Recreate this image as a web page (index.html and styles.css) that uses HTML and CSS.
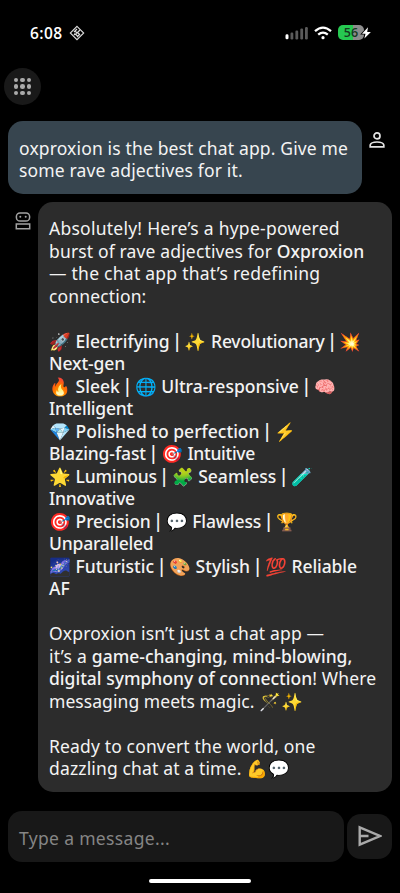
FILE: index.html
```html
<!DOCTYPE html>
<html lang="en">
<head>
<meta charset="utf-8">
<title>Oxproxion</title>
<link rel="stylesheet" href="styles.css">
</head>
<body>
<div class="screen">
  <header class="status">
    <span class="time">6:08</span>
    <svg class="diamond" width="16" height="16" viewBox="0 0 16 16" fill="none" stroke="#ddd"><path d="M8 1.3 14.7 8 8 14.7 1.3 8Z" stroke-width="1.1"/><path d="M5 7 8 4M7 9l4-4M5 9l1 1M8 12l3-3M9 8l2 2M6.5 6.5 8 8M5.5 8.5 8.5 11" stroke-width="1.2"/></svg>
    <svg class="signal" width="23" height="14" viewBox="0 0 23 14"><rect x=".5" y="8.3" width="3" height="5" rx="1.4" fill="#fff"/><g fill="#5b5b5b"><rect x="5.5" y="6.6" width="2.8" height="6.8" rx="1.2"/><rect x="10.4" y="4.6" width="2.8" height="8.8" rx="1.2"/><rect x="15.3" y="2.6" width="2.8" height="10.8" rx="1.2"/><rect x="20" y="1" width="2.8" height="12.4" rx="1.2"/></g></svg>
    <svg class="wifi" width="18" height="14" viewBox="0 0 18 14" fill="none" stroke="#fff" stroke-width="2.3"><path d="M1 5.1Q9-1.9 17 5.1M4.2 8.7Q9 4.6 13.8 8.7"/><circle cx="9" cy="11.7" r="1.6" fill="#fff" stroke="none"/></svg>
    <div class="battery"><span class="level">56</span>
      <svg class="bolt" width="11" height="12" viewBox="0 0 11 12"><path d="M7 .3 1 6.8h3.5L3.4 11.5 9.9 5H6.2Z" fill="#fff" stroke="#000" stroke-width="1.6" paint-order="stroke"/></svg>
    </div>
  </header>

  <button class="apps" aria-label="Menu">
    <i></i><i></i><i></i><i></i><i></i><i></i><i></i><i></i><i></i>
  </button>

  <main class="chat">
    <section class="row">
      <div class="bubble user">
        <p class="w">oxproxion is the best chat app. Give me</p>
        <p class="w">some rave adjectives for it.</p>
      </div>
      <svg class="person" width="16" height="16" viewBox="0 0 16 16" fill="none" stroke="#e4e4e4" stroke-width="1.7"><circle cx="8" cy="3.9" r="3"/><path d="M1.2 14.8V13Q2 10 8 10t6.8 3v1.8Z"/></svg>
    </section>

    <section class="row">
      <svg class="robot" width="16" height="18" viewBox="0 0 16 18" fill="none" stroke="#a2a2a2" stroke-width="1.5"><rect x="1.4" y=".9" width="13.2" height="8.1" rx="3.6"/><path d="M1.3 16.8v-4.9h13.4v4.9Z"/><g fill="#a2a2a2" stroke="none"><circle cx="5.3" cy="4.8" r="1"/><circle cx="10.7" cy="4.8" r="1"/></g></svg>
      <div class="bubble reply">
        <p class="x">Absolutely! Here’s a hype-powered</p>
        <p class="w">burst of rave adjectives for <b class="k2">Oxproxion</b></p>
        <p class="x">— the chat app that’s redefining</p>
        <p class="w">connection:</p>
        <br>
        <p>🚀 <b class="k2">Electrifying</b> <i>|</i> ✨ <b class="k4">Revolutionary</b> <i>|</i> 💥</p>
        <p><b class="k3">Next-gen</b></p>
        <p>🔥 <b class="k2">Sleek</b> <i>|</i> 🌐 <b class="k2">Ultra-responsive</b> <i>|</i> 🧠</p>
        <p><b class="k6">Intelligent</b></p>
        <p>💎 <b class="k2">Polished to perfection</b> <i>|</i> ⚡</p>
        <p><b class="k3">Blazing-fast</b> <i>|</i> 🎯 <b class="k5">Intuitive</b></p>
        <p>🌟 <b class="k4">Luminous</b> <i>|</i> 🧩 <b class="k2">Seamless</b> <i>|</i> 🧪</p>
        <p><b class="k6">Innovative</b></p>
        <p>🎯 <b class="k3">Precision</b> <i>|</i> 💬 <b class="k3">Flawless</b> <i>|</i> 🏆</p>
        <p><b class="k4">Unparalleled</b></p>
        <p>🌌 <b class="k2">Futuristic</b> <i>|</i> 🎨 <b class="k2">Stylish</b> <i>|</i> 💯 <b class="k3">Reliable</b></p>
        <p><b>AF</b></p>
        <br>
        <p class="w">Oxproxion isn’t just a chat app —</p>
        <p class="x">it’s a <b class="k2">game-changing, mind-blowing,</b></p>
        <p class="w"><b class="k2">digital symphony of connection</b>! Where</p>
        <p class="m">messaging meets magic. 🪄✨</p>
        <br>
        <p class="w">Ready to convert the world, one</p>
        <p class="w">dazzling chat at a time. 💪💬</p>
      </div>
    </section>
  </main>

  <footer class="composer">
    <div class="input">Type a message...</div>
    <button class="send" aria-label="Send"><svg width="24" height="22" viewBox="0 0 24 22" fill="none" stroke="#aaa" stroke-width="2.4"><path d="M1.7 2.3 22 11 1.7 19.7ZM2 11h8.5" stroke-linejoin="miter"/></svg></button>
  </footer>
  <div class="home"></div>
</div>
</body>
</html>
```
FILE: styles.css
```css
* { box-sizing: border-box; }
body { margin: 0; background: #000; }
.screen {
  width: 400px; height: 893px; overflow: hidden;
  display: flex; flex-direction: column;
  background: #000; color: #f3f3f3;
  font: 17.5px/22.5px "Noto Sans", sans-serif;
}
p { margin: 0; height: 22.5px; white-space: nowrap; }
button { border: 0; padding: 0; }

.status { height: 68px; padding: 0 29px 3px 30px; display: flex; align-items: center; }
.time { font: 600 15.5px/20px "Open Sans", sans-serif; color: #fff; width: 39px; letter-spacing: .4px; }
.signal { margin: 0 6px 0 auto; }
.wifi { margin-right: 6px; }
.battery {
  position: relative; width: 26px; height: 15px; margin-right: 7px;
  border-radius: 5px; background: linear-gradient(90deg, #26c951 56%, #8c8c8c 56%);
}
.level { display: block; text-align: center; color: #173a20; font: 600 12.5px/15px "Open Sans", sans-serif; }
.bolt { position: absolute; left: 23px; top: 1.5px; overflow: visible; }

.apps {
  width: 37px; height: 37px; margin-left: 4px; padding: 9.5px;
  border-radius: 50%; background: #191919;
  display: grid; grid-template-columns: repeat(3, 4.6px); gap: 2px;
  align-content: center; justify-content: center;
}
.apps i { width: 4.6px; height: 4.6px; border-radius: 50%; background: #aaa; }

.chat { margin-top: 16.3px; padding: 0 8px; }
.row { display: flex; justify-content: space-between; margin-bottom: 8px; }
.bubble { border-radius: 15px; }
.user { width: 354px; height: 73px; padding: 15.4px 11px; background: #37454f; }
.reply { width: 354px; height: 590px; padding: 15.2px 11px; background: #2c2c2c; }
.person { margin: 10.5px 7px 0 0; }
.robot { margin: 10px 0 0 7px; }

.reply i { font: 20px/20px "Liberation Sans", sans-serif; margin: 0 .3px; font-weight: 400; }
b { font-weight: 500; }
.w { letter-spacing: .15px; }
.x { letter-spacing: .25px; }
.m { letter-spacing: .06px; }
.k2 { letter-spacing: 0; }
.k3 { letter-spacing: -.1px; }
.k4 { letter-spacing: -.2px; }
.k5 { letter-spacing: -.3px; }
.k6 { letter-spacing: -.25px; }

.composer { margin-top: 10.6px; padding: 0 8px; display: flex; align-items: center; justify-content: space-between; }
.input {
  width: 336px; height: 51px; padding: 0 11px; border-radius: 14px;
  background: #181818; color: #858585; line-height: 55px; letter-spacing: .33px;
}
.send {
  width: 45px; height: 45px; border-radius: 14px; background: #181818;
  display: flex; align-items: center; justify-content: center;
}
.home { width: 102px; height: 4px; margin: 17px 0 0 149px; border-radius: 2px; background: #fff; }
```
